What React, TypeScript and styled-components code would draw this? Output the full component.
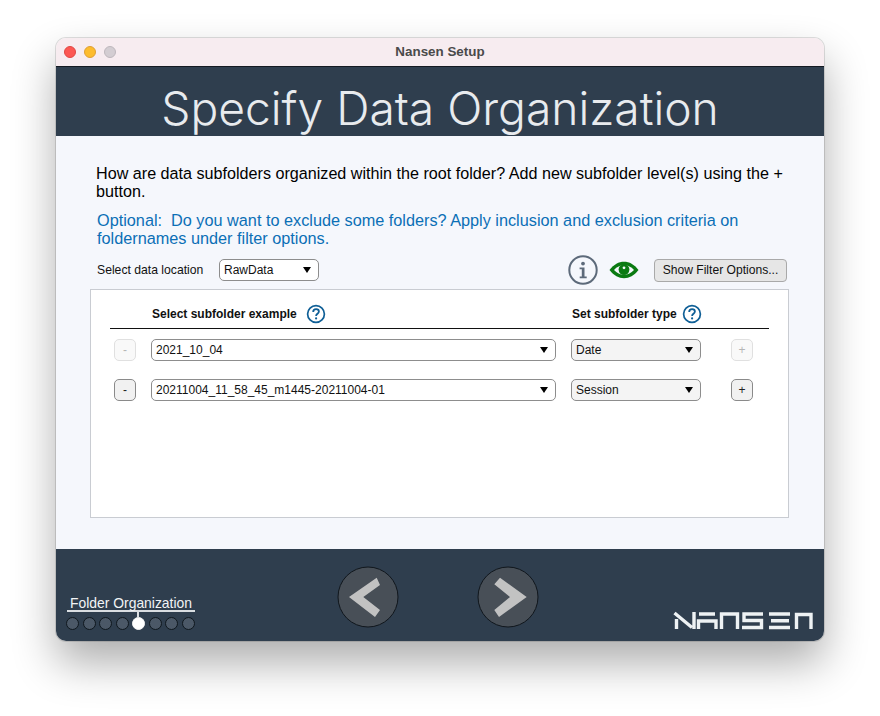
import React from 'react';
import styled, { createGlobalStyle } from 'styled-components';

const GlobalStyle = createGlobalStyle`
  html, body {
    margin: 0;
    padding: 0;
    background: #fff;
    font-family: "Liberation Sans", Arial, sans-serif;
  }
`;

const Page = styled.div`
  width: 880px;
  height: 716px;
  padding: 38px 56px 0;
  box-sizing: border-box;
  overflow: hidden;
`;

const Window = styled.div`
  width: 768px;
  height: 603px;
  display: flex;
  flex-direction: column;
  border-radius: 10px;
  overflow: hidden;
  box-shadow: 0 0 0 1px rgba(0, 0, 0, 0.12), 0 22px 44px rgba(0, 0, 0, 0.32);
`;

const TitleBar = styled.div`
  position: relative;
  height: 28px;
  flex: none;
  background: #f7ecf0;
  border-bottom: 1px solid #141a22;
  display: flex;
  align-items: center;
  justify-content: center;
  font-size: 13.4px;
  font-weight: bold;
  color: #4a4a4a;
  line-height: 26px;
`;

const Lights = styled.div`
  position: absolute;
  left: 8px;
  top: 8px;
  display: flex;
  gap: 8px;
`;

const Light = styled.span<{ $color: string; $edge: string }>`
  width: 12px;
  height: 12px;
  border-radius: 50%;
  box-sizing: border-box;
  background: ${(p) => p.$color};
  border: 1px solid ${(p) => p.$edge};
`;

const Header = styled.div`
  height: 69px;
  flex: none;
  background: #2f3e4e;
  color: #e8ebee;
  display: flex;
  justify-content: center;
  align-items: flex-start;
`;

const Heading = styled.h1`
  margin: 13px 0 0;
  font-family: Inter, "Liberation Sans", sans-serif;
  font-weight: 340;
  font-size: 46.2px;
  line-height: 56px;
  white-space: nowrap;
`;

const Body = styled.div`
  flex: 1;
  background: #f5f7fc;
  padding: 28px 35px 31px 34px;
  display: flex;
  flex-direction: column;
`;

const Intro = styled.p<{ $blue?: boolean }>`
  margin: ${(p) => (p.$blue ? '11px 0 0 7px' : '0 0 0 6px')};
  font-size: ${(p) => (p.$blue ? '16.25px' : '16.15px')};
  line-height: 18px;
  color: ${(p) => (p.$blue ? '#0b6fb6' : '#000')};
`;

const ToolRow = styled.div`
  display: flex;
  align-items: center;
  height: 24px;
  margin-top: 11px;
  padding-left: 7px;
`;

const ToolLabel = styled.span`
  font-size: 12.2px;
  color: #111;
  width: 122px;
`;

const Select = styled.div<{ $width?: number }>`
  height: 22px;
  width: ${(p) => (p.$width ? `${p.$width}px` : 'auto')};
  box-sizing: border-box;
  display: flex;
  align-items: center;
  justify-content: space-between;
  padding: 0 7px 0 4px;
  background: #fff;
  border: 1px solid #8d8d8d;
  border-radius: 5px;
  font-size: 12px;
  color: #111;
`;

const TypeSelect = styled(Select)`
  margin-left: 15px;
  background: #f4f4f4;
`;

const Arrow = styled.span`
  width: 0;
  height: 0;
  border-left: 4px solid transparent;
  border-right: 4px solid transparent;
  border-top: 6px solid #000;
`;

const ToolRight = styled.div`
  margin-left: auto;
  margin-right: 2px;
  display: flex;
  align-items: center;
`;

const EyeSlot = styled.span`
  display: flex;
  margin-left: 11px;
`;

const FilterButton = styled.button`
  width: 133px;
  height: 23px;
  margin-left: 15px;
  padding: 0;
  background: #e6e6e6;
  border: 1px solid #a9a9a9;
  border-radius: 4px;
  font-family: inherit;
  font-size: 12.1px;
  color: #111;
`;

const Panel = styled.div`
  margin-top: 7px;
  height: 229px;
  box-sizing: border-box;
  background: #fff;
  border: 1px solid #c9ccd2;
  padding: 0 19px;
`;

const HeadRow = styled.div`
  display: grid;
  grid-template-columns: 42px 420px 1fr;
  height: 39px;
  box-sizing: border-box;
  padding-top: 10px;
  align-items: center;
  border-bottom: 1px solid #111;
  font-size: 12px;
  font-weight: bold;
  color: #111;
`;

const HeadCell = styled.div<{ $gap: number }>`
  display: flex;
  align-items: center;
  gap: ${(p) => p.$gap}px;
`;

const Rows = styled.div`
  margin-top: 10px;
  display: flex;
  flex-direction: column;
  gap: 18px;
`;

const Row = styled.div`
  display: grid;
  grid-template-columns: 41px 405px 145px 52px;
  align-items: center;
  height: 22px;
`;

const StepButton = styled.button<{ $off?: boolean; $right?: boolean }>`
  width: 22px;
  height: 22px;
  padding: 0;
  margin-left: ${(p) => (p.$right ? '30px' : '4px')};
  background: ${(p) => (p.$off ? '#f9f9f9' : '#f1f1f1')};
  border: 1px solid ${(p) => (p.$off ? '#e0e0e0' : '#8a8a8a')};
  border-radius: 5px;
  font-family: inherit;
  font-size: 12px;
  line-height: 18px;
  color: ${(p) => (p.$off ? '#b5b5b5' : '#222')};
`;

const Footer = styled.div`
  height: 92px;
  flex: none;
  box-sizing: border-box;
  background: #2f3e4e;
  display: grid;
  grid-template-columns: 271px 202px 1fr;
  padding-left: 10px;
`;

const Stage = styled.div`
  align-self: end;
  width: 130px;
  padding-bottom: 11px;
`;

const StageLabel = styled.div`
  color: #f2f4f6;
  font-size: 13.9px;
  line-height: 13px;
  padding-left: 3px;
  border-bottom: 2px solid #d9dde1;
  width: 125px;
  margin-left: 1px;
`;

const Dots = styled.div`
  display: flex;
  gap: 3.5px;
  margin-top: 5px;
`;

const Dot = styled.span<{ $on?: boolean }>`
  position: relative;
  width: 13px;
  height: 13px;
  border-radius: 50%;
  box-sizing: border-box;
  background: ${(p) => (p.$on ? '#fff' : '#4b5867')};
  border: 1.3px solid ${(p) => (p.$on ? '#f4f4f4' : '#10181f')};
  &::before {
    content: ${(p) => (p.$on ? "''" : 'none')};
    position: absolute;
    left: 4px;
    top: -6px;
    width: 2px;
    height: 5px;
    background: #d9dde1;
  }
`;

const Nav = styled.div`
  display: flex;
  justify-content: space-between;
  padding-top: 17px;
`;

const LogoSlot = styled.div`
  display: flex;
  justify-content: flex-end;
  align-items: flex-end;
  padding: 0 11px 11px 0;
`;

const HelpIcon = () => (
  <svg width="20" height="20" viewBox="0 0 20 20">
    <circle cx="10" cy="10" r="8.4" fill="#fff" stroke="#0f5f96" strokeWidth="1.7" />
    <path d="M7.2 8c0-1.8 1.2-2.8 2.9-2.8s2.8 1 2.8 2.4c0 2.2-2.8 2.2-2.8 4.3" fill="none" stroke="#0f5f96" strokeWidth="1.8" />
    <circle cx="10.1" cy="14.4" r="1.1" fill="#0f5f96" />
  </svg>
);

const InfoIcon = () => (
  <svg width="30" height="30" viewBox="0 0 30 30">
    <circle cx="15" cy="15" r="13.7" fill="none" stroke="#5d6a7a" strokeWidth="2" />
    <circle cx="15" cy="8.6" r="1.9" fill="#5d6a7a" />
    <path d="M11.6 12.6h4.9v9h2.2v1.6h-7v-1.6h2.1v-7.4h-2.2z" fill="#5d6a7a" />
  </svg>
);

const EyeIcon = () => (
  <svg width="30" height="18" viewBox="0 0 30 18">
    <path d="M0.5 9C5 3.4 9.6 0.8 15 0.8S25 3.4 29.5 9C25 14.6 20.4 17.2 15 17.2S5 14.6 0.5 9z" fill="#0a7a12" />
    <path d="M5 9C8 5.8 11 4.3 15 4.3S22 5.8 25 9C22 12.2 19 13.7 15 13.7S8 12.2 5 9z" fill="#f5f7fc" />
    <circle cx="15" cy="8.6" r="5.4" fill="#0a7a12" />
    <circle cx="15" cy="6.8" r="1.4" fill="#f5f7fc" />
  </svg>
);

const NavButton = ({ dir }: { dir: 'left' | 'right' }) => (
  <svg width="62" height="62" viewBox="0 0 62 62">
    <circle cx="31" cy="31" r="30" fill="#484f57" stroke="#10161c" strokeWidth="1" />
    <path
      d={dir === 'left' ? 'M39.7 11.7L43 19L26.3 31L43 44L38 51L12 31z' : 'M23 11.7L17.3 18.3L33 31L17.3 44L22 51L49.7 31z'}
      fill="#c2c2c2"
    />
  </svg>
);

// drawn with plain strokes, the wordmark is not a font
const Logo = () => (
  <svg width="140" height="19" viewBox="0 0 140 19" role="img" aria-label="Nansen" fill="none" stroke="#eef2f4" strokeWidth="3.4">
    <path d="M3.5 18V8M1.5 2L19 16.5M21 18V1" />
    <path d="M26 3H42M25.5 18V10H43V18" />
    <path d="M48.5 18V3H64.5V18" />
    <path d="M90 3H71V9.5H88.5V16.5H69" />
    <path d="M96 3H117M98 9.8H116M96 16.5H117" />
    <path d="M123.5 18V3.5H138V18" />
  </svg>
);

const App = () => {
  return (
    <Page>
      <GlobalStyle />
      <Window>
        <TitleBar>
          <Lights>
            <Light $color="#fc5753" $edge="#df4744" />
            <Light $color="#fdbc2e" $edge="#de9f34" />
            <Light $color="#d3cdd2" $edge="#bdb7bc" />
          </Lights>
          Nansen Setup
        </TitleBar>
        <Header>
          <Heading>Specify Data Organization</Heading>
        </Header>
        <Body>
          <Intro>How are data subfolders organized within the root folder? Add new subfolder level(s) using the + button.</Intro>
          <Intro $blue>Optional:&nbsp; Do you want to exclude some folders? Apply inclusion and exclusion criteria on foldernames under filter options.</Intro>
          <ToolRow>
            <ToolLabel>Select data location</ToolLabel>
            <Select $width={100}>
              RawData
              <Arrow />
            </Select>
            <ToolRight>
              <InfoIcon />
              <EyeSlot>
                <EyeIcon />
              </EyeSlot>
              <FilterButton>Show Filter Options...</FilterButton>
            </ToolRight>
          </ToolRow>
          <Panel>
            <HeadRow>
              <span />
              <HeadCell $gap={9}>
                Select subfolder example <HelpIcon />
              </HeadCell>
              <HeadCell $gap={5}>
                Set subfolder type <HelpIcon />
              </HeadCell>
            </HeadRow>
            <Rows>
              <Row>
                <StepButton $off>-</StepButton>
                <Select>
                  2021_10_04
                  <Arrow />
                </Select>
                <TypeSelect>
                  Date
                  <Arrow />
                </TypeSelect>
                <StepButton $off $right>+</StepButton>
              </Row>
              <Row>
                <StepButton>-</StepButton>
                <Select>
                  20211004_11_58_45_m1445-20211004-01
                  <Arrow />
                </Select>
                <TypeSelect>
                  Session
                  <Arrow />
                </TypeSelect>
                <StepButton $right>+</StepButton>
              </Row>
            </Rows>
          </Panel>
        </Body>
        <Footer>
          <Stage>
            <StageLabel>Folder Organization</StageLabel>
            <Dots>
              {[0, 1, 2, 3, 4, 5, 6, 7].map((i) => (
                <Dot key={i} $on={i === 4} />
              ))}
            </Dots>
          </Stage>
          <Nav>
            <NavButton dir="left" />
            <NavButton dir="right" />
          </Nav>
          <LogoSlot>
            <Logo />
          </LogoSlot>
        </Footer>
      </Window>
    </Page>
  );
};

export default App;
